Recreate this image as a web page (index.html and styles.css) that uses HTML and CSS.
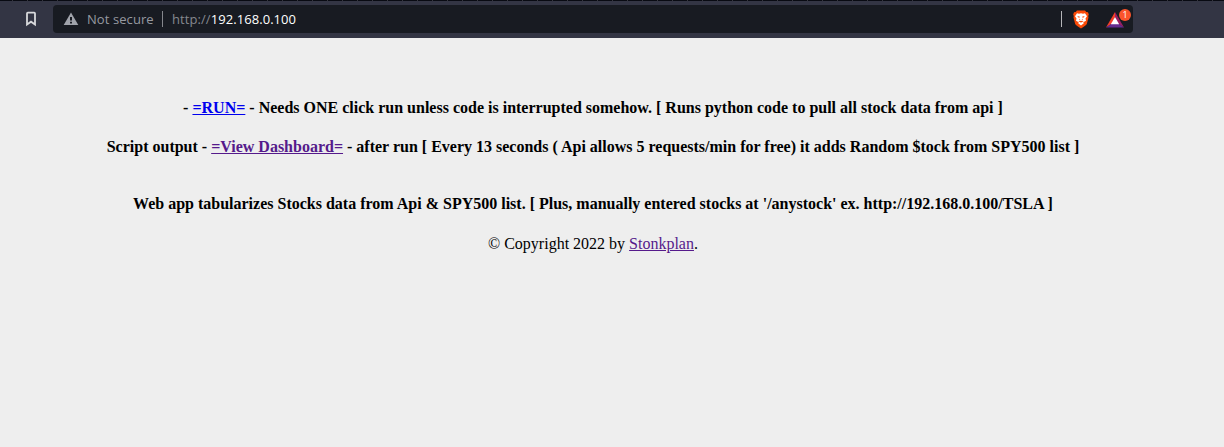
FILE: index.html
```
<!DOCTYPE html>
<html lang="en">
<head>
<meta charset="utf-8">
<title>Stonkplan</title>
<link rel="stylesheet" href="styles.css">
</head>
<body>
<header class="toolbar">
  <svg class="bookmark" width="12" height="16" viewBox="0 0 12 16"><path d="M2 2.500Q2 1.700 2.800 1.700H9.200Q10 1.700 10 2.500V13.500L6 10.700L2 13.500Z" fill="none" stroke="#d8d9dc" stroke-width="1.800"/></svg>
  <div class="address">
    <svg class="warning" width="16" height="14" viewBox="0 0 16 14"><path d="M8 .5L15.3 13H.7Z" fill="#a0a3ab"/><path d="M7 5h2v3.600H7zM7 9.800h2v1.700H7z" fill="#181b22"/></svg>
    <span class="security">Not secure</span>
    <span class="divider"></span>
    <span class="url"><span class="scheme">http://</span><span class="host">192.168.0.100</span></span>
    <span class="divider end"></span>
    <svg class="lion" width="16" height="19" viewBox="0 0 16 19"><path d="M4 .5H12L13.3 2L15 2.200L15.800 4.600L15.200 6L15.500 7.500L13.800 14Q13.300 15.400 8 18.500Q2.700 15.400 2.200 14L.5 7.500L.8 6L.2 4.600L1 2.200L2.700 2Z" fill="#fb4b08"/><path d="M4 3.200L6 3.800L8 3.200L10 3.800L12 3.200L14 6.200L12.500 8.500L13 10.800L10.300 12.200L10.800 13.300L8 15.500L5.200 13.300L5.700 12.200L3 10.800L3.500 8.500L2 6.200Z" fill="#fff"/><path d="M4.200 6L7 6.800L6 8ZM11.800 6L9 6.800L10 8ZM6.500 8.500L7.300 10L6.300 10.300ZM9.500 8.500L8.700 10L9.700 10.300ZM5.200 11.600L8 10.800L10.800 11.600L8 12.600Z" fill="#fb4b08"/></svg>
    <span class="rewards">
      <svg class="triangle" width="18" height="16" viewBox="0 0 18 16"><path d="M9 0L0 15.500L6 11.500L9 5Z" fill="#f43f28"/><path d="M9 0L18 15.500L12 11.500L9 5Z" fill="#9c1f63"/><path d="M0 15.500H18L13 12H5Z" fill="#652b8e"/><path d="M9 5L13.200 12.300H4.800Z" fill="#fff"/></svg>
      <span class="badge">1</span>
    </span>
  </div>
</header>
<main class="content">
  <p class="line strong">- <a href="#">=RUN=</a> - Needs ONE click run unless code is interrupted somehow. [ Runs python code to pull all stock data from api ]</p>
  <p class="line strong dashboard">Script output - <a class="visited" href="#">=View Dashboard=</a> - after run [ Every 13 seconds ( Api allows 5 requests/min for free) it adds Random $tock from SPY500 list ]</p>
  <p class="line strong about">Web app tabularizes Stocks data from Api &amp; SPY500 list. [ Plus, manually entered stocks at '/anystock' ex. http://192.168.0.100/TSLA ]</p>
  <p class="line copyright">© Copyright 2022 by <a class="visited" href="#">Stonkplan</a>.</p>
</main>
</body>
</html>
```
FILE: styles.css
```
* { box-sizing: border-box; }
body { margin: 0; height: 447px; overflow: hidden; background: #eee; }
.toolbar {
  display: flex;
  height: 38px;
  padding: 5px 91px 5px 25px;
  background: repeating-linear-gradient(90deg, #080a12 0 12px, #34343d 12px 13px, #080a12 13px 15px) 0 0 / 100% 1px no-repeat, #333544;
}
.bookmark { margin: 6px 16px 0 0; flex: none; }
.address {
  display: flex;
  align-items: center;
  width: 1080px;
  height: 28px;
  padding: 0 9px 0 10px;
  border-radius: 4px;
  background: #181b22;
  font: 13px/18px "Open Sans", sans-serif;
  white-space: nowrap;
}
.warning { flex: none; }
.security { width: 67px; margin-left: 8px; color: #9699a0; letter-spacing: 0.08px; }
.divider { width: 1px; height: 16px; margin-left: 8px; background: #85878d; }
.url { margin-left: 9px; letter-spacing: 0.07px; }
.scheme { color: #85888f; }
.host { color: #fff; }
.divider.end { margin-left: auto; background: #b5b6b9; }
.lion { margin-left: 11px; }
.rewards { position: relative; width: 18px; height: 16px; margin: 2px 0 0 17px; }
.triangle { display: block; }
.badge {
  position: absolute;
  left: 13px;
  top: -3px;
  width: 12px;
  height: 12px;
  border-radius: 6px;
  background: #fb542b;
  color: #fff;
  font: 9px/12px "Open Sans", sans-serif;
  text-align: center;
}
.content { width: 1186px; padding-top: 61px; font: 16px/18px "Liberation Serif", serif; color: #000; text-align: center; }
.line { margin: 0; white-space: nowrap; }
.strong { font-weight: bold; }
.dashboard { margin-top: 21px; }
.about { margin-top: 39px; }
.copyright { margin-top: 22px; }
a { color: #00e; text-decoration: underline; }
a.visited { color: #551a8b; }
```
